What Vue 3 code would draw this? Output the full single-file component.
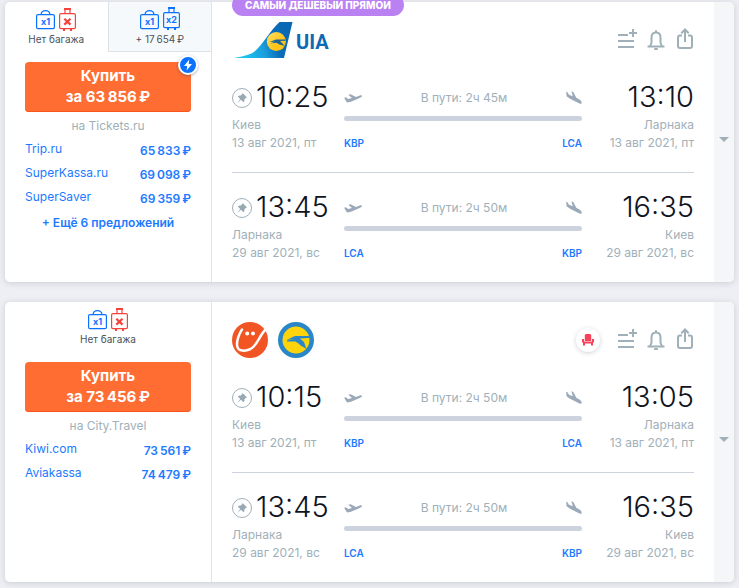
<script setup>
const tickets = [
  {
    id: 1,
    badge: 'Самый дешевый прямой',
    tabs: [
      { price: 'Нет багажа', bag: 'x1', luggage: null, active: true },
      { price: '+ 17\u2009654\u2009₽', bag: 'x1', luggage: 'x2', active: false },
    ],
    instant: true,
    price: '63\u2009856\u2009₽',
    agency: 'Tickets.ru',
    offers: [
      { name: 'Trip.ru', price: '65\u2009833\u2009₽' },
      { name: 'SuperKassa.ru', price: '69\u2009098\u2009₽' },
      { name: 'SuperSaver', price: '69\u2009359\u2009₽' },
    ],
    more: '+ Ещё 6 предложений',
    carriers: ['uia'],
    seat: false,
    segments: [
      { depart: '10:25', arrive: '13:10', from: 'Киев', to: 'Ларнака', date: '13 авг 2021, пт', duration: '2ч 45м', a: 'KBP', b: 'LCA' },
      { depart: '13:45', arrive: '16:35', from: 'Ларнака', to: 'Киев', date: '29 авг 2021, вс', duration: '2ч 50м', a: 'LCA', b: 'KBP' },
    ],
  },
  {
    id: 2,
    badge: '',
    tabs: [{ price: 'Нет багажа', bag: 'x1', luggage: null, active: true }],
    instant: false,
    price: '73\u2009456\u2009₽',
    agency: 'City.Travel',
    offers: [
      { name: 'Kiwi.com', price: '73\u2009561\u2009₽' },
      { name: 'Aviakassa', price: '74\u2009479\u2009₽' },
    ],
    more: '',
    carriers: ['smile', 'bird'],
    seat: true,
    segments: [
      { depart: '10:15', arrive: '13:05', from: 'Киев', to: 'Ларнака', date: '13 авг 2021, пт', duration: '2ч 50м', a: 'KBP', b: 'LCA' },
      { depart: '13:45', arrive: '16:35', from: 'Ларнака', to: 'Киев', date: '29 авг 2021, вс', duration: '2ч 50м', a: 'LCA', b: 'KBP' },
    ],
  },
]
</script>

<template>
  <main class="list">
    <article v-for="t in tickets" :key="t.id" class="card">
      <span v-if="t.badge" class="badge">{{ t.badge }}</span>

      <section class="side">
        <div class="tabs">
          <button
            v-for="(tab, i) in t.tabs"
            :key="i"
            type="button"
            class="tab"
            :class="{ inactive: !tab.active }"
          >
            <svg class="bags" viewBox="0 0 40 24" width="40" height="24">
              <g fill="none" stroke="#0b72ff" stroke-width="1.2">
                <rect x="0.6" y="7.6" width="17.8" height="14" rx="1.4" />
                <path d="M5 7.5C5.5 2.2 13.5 2.2 14 7.5" />
              </g>
              <text class="bag-text blue" x="9.5" y="17.7">{{ tab.bag }}</text>
              <g v-if="tab.luggage" fill="none" stroke="#0b72ff" stroke-width="1.2">
                <rect x="23.6" y="5.6" width="15.8" height="15" rx="1.4" />
                <path d="M29 5.5V1M34 5.5V1" />
                <path d="M28 1H35" stroke-width="2" />
                <path d="M28 20.6V23M35 20.6V23" stroke-width="2" />
              </g>
              <text v-if="tab.luggage" class="bag-text blue" x="31.5" y="16">{{ tab.luggage }}</text>
              <g v-if="!tab.luggage" fill="none" stroke="#f4433c" stroke-width="1.2">
                <rect x="23.6" y="6.6" width="15.8" height="15" rx="1.4" />
                <path d="M29 6.5V2M34 6.5V2" />
                <path d="M28 2H35" stroke-width="2" />
                <path d="M28 21.6V24M35 21.6V24" stroke-width="2" />
                <path d="M28.3 11.8L34.5 17.6M34.5 11.8L28.3 17.6" stroke-width="2.2" />
              </g>
            </svg>
            <span class="tab-price">{{ tab.price }}</span>
          </button>
        </div>

        <div class="offers">
          <button type="button" class="buy">
            <span>Купить</span>
            <span>за {{ t.price }}</span>
            <span v-if="t.instant" class="instant">
              <svg viewBox="0 0 16 16" width="16" height="16">
                <path fill="#fff" d="M9.3 2.5L4 9H7.2L6.6 13.5L12 7H8.7Z" />
              </svg>
            </span>
          </button>
          <p class="agency">на {{ t.agency }}</p>
          <a v-for="o in t.offers" :key="o.name" href="#" class="offer">
            <span>{{ o.name }}</span>
            <strong>{{ o.price }}</strong>
          </a>
          <button v-if="t.more" type="button" class="more">{{ t.more }}</button>
        </div>
      </section>

      <section class="main">
        <header class="head">
          <div class="carriers">
            <template v-for="c in t.carriers" :key="c">
              <svg v-if="c === 'uia'" viewBox="0 0 100 36" width="100" height="36">
                <defs>
                  <linearGradient id="tail" x1="0" y1="0.6" x2="1" y2="0.4">
                    <stop offset="0.1" stop-color="#1cc4f0" />
                    <stop offset="0.45" stop-color="#1a9fdc" />
                    <stop offset="0.7" stop-color="#0b6cb8" />
                    <stop offset="1" stop-color="#0a67b2" />
                  </linearGradient>
                  <linearGradient id="sun" x1="0" y1="0" x2="1" y2="1">
                    <stop offset="0" stop-color="#ffdf6a" />
                    <stop offset="0.6" stop-color="#fdc51b" />
                  </linearGradient>
                </defs>
                <path fill="url(#tail)" d="M2 36C12 34 18 33 22.500 29.500C31 22 38 9 47.500 0H60.500L52 36Z" />
                <circle cx="44.300" cy="19.500" r="9.500" fill="url(#sun)" />
                <path fill="#17649b" d="M37.500 20L44 17.500H53.500V18.800L48 19L51.500 22.500L53 24L47.500 22.500L44.500 20.800L38 21.500L43 19.800Z" />
                <text class="uia" x="64" y="27">UIA</text>
              </svg>
              <svg v-else-if="c === 'smile'" viewBox="0 0 36 36" width="36" height="36">
                <circle cx="18" cy="18" r="18" fill="#f15523" />
                <path fill="none" stroke="#fff" stroke-width="2.500" stroke-linecap="round" d="M10 7.500C7.500 11 4 19.500 5.300 24.500C6.500 29.500 13 29.500 18.500 27C25.500 23.500 27.500 13 33.500 7.800" />
                <circle cx="15.200" cy="11.500" r="2" fill="#fff" />
                <circle cx="21" cy="11.500" r="2" fill="#fff" />
              </svg>
              <svg v-else viewBox="0 0 36 36" width="36" height="36">
                <circle cx="18" cy="18" r="18" fill="#2886c9" />
                <circle cx="18" cy="18" r="13.500" fill="#fdd40b" />
                <path fill="#2886c9" d="M8.500 18L17 14H33V15.700L22 16.500L26 20L28.500 27C25 24.500 22.500 24 20.500 21.500L17.500 19.500L9 19.500V18.500L16.500 17Z" />
              </svg>
            </template>
          </div>
          <span v-if="t.seat" class="seat">
            <svg viewBox="0 0 14 14" width="14" height="14" fill="#f8425a">
              <path d="M4.800 1H9.200L10.200 2V8H3.800V2Z" />
              <path d="M1 6H3V8.500H11V6H13V9.500H12V12.500H10V10.500H4V12.500H2V9.500H1Z" />
            </svg>
          </span>
          <div class="actions">
            <button type="button" class="icon" aria-label="Добавить к сравнению">
              <svg viewBox="0 0 18 22" width="18" height="22">
                <path d="M0 6H10M0 12H16M0 18H16M15 0V8M11 4H19" />
              </svg>
            </button>
            <button type="button" class="icon" aria-label="Следить за ценой">
              <svg viewBox="0 0 18 22" width="18" height="22">
                <path d="M0.500 17.500H17.500M3 17C4.200 15.500 4.500 15 4.500 13V8.500C4.500 5.500 6.300 3.500 9 3.500S13.500 5.500 13.500 8.500V13C13.500 15 13.800 15.500 15 17" />
                <path d="M9 1.200V3.500M7.200 20H10.800" />
              </svg>
            </button>
            <button type="button" class="icon" aria-label="Поделиться">
              <svg viewBox="0 0 18 22" width="18" height="22">
                <path d="M6 6.500H4Q2 6.500 2 8.500V17Q2 19 4 19H14Q16 19 16 17V8.500Q16 6.500 14 6.500H12M9 1V13M5.300 4.200L9 0.500L12.700 4.200" />
              </svg>
            </button>
          </div>
        </header>

        <div v-for="(s, i) in t.segments" :key="i" class="segment">
          <div class="point">
            <div class="time-row">
              <button type="button" class="pin" aria-label="Закрепить">
                <svg viewBox="0 0 20 20" width="20" height="20">
                  <circle cx="10" cy="10" r="9.500" fill="none" stroke="#a0b0b9" />
                  <path fill="#98a9b4" d="M10.600 5L15 9.400L13.800 9.900L12.400 11.300C12.700 12.600 12.300 13.500 11.500 14.200L8.900 11.700L5.300 14.900L8.200 11L5.800 8.500C6.600 7.700 7.500 7.400 8.700 7.600L10.100 6.200Z" />
                </svg>
              </button>
              <span class="time">{{ s.depart }}</span>
            </div>
            <div class="sub">{{ s.from }}</div>
            <div class="sub">{{ s.date }}</div>
          </div>

          <div class="route">
            <div class="route-top">
              <svg viewBox="0 0 18 12" width="18" height="12">
                <path fill="#9aa8b8" d="M0.200 5.700L1.800 5.300L4.200 7L8 6.100L4.300 2.700L6.600 2.300L12 5L15.800 3.500C17.300 3 18.200 3.700 17.800 4.600C17.500 5.400 16 6 14.500 6.600L7 9.700L3.300 10.600L2.300 9.600Z" />
              </svg>
              <span>В пути: {{ s.duration }}</span>
              <svg viewBox="0 0 16 14" width="16" height="14">
                <path fill="#9aa8b8" d="M0.200 0.800L1.500 1.300L2.900 3.800L6.800 5.300L5.400 0.200L7.300 1L10.300 6.800L13.800 8.800C15.500 9.900 16 11.500 15.500 12.400C14.700 13 13.500 12.400 12 11.700L4 7.700L0.600 5.200Z" />
              </svg>
            </div>
            <div class="bar"></div>
            <div class="codes"><span>{{ s.a }}</span><span>{{ s.b }}</span></div>
          </div>

          <div class="point end">
            <div class="time-row"><span class="time">{{ s.arrive }}</span></div>
            <div class="sub">{{ s.to }}</div>
            <div class="sub">{{ s.date }}</div>
          </div>
        </div>
      </section>

      <button type="button" class="expand" aria-label="Подробнее"><span class="arrow"></span></button>
    </article>
  </main>
</template>

<style>
body {
  margin: 0;
  background: #eeeff4;
}
</style>

<style scoped>
.list {
  display: flex;
  flex-direction: column;
  gap: 20px;
  padding: 2px 5px 6px;
  font-family: Inter, "Liberation Sans", sans-serif;
  font-size: 12px;
  line-height: 18px;
  color: #a0b0b9;
}
button {
  margin: 0;
  padding: 0;
  border: 0;
  background: none;
  font: inherit;
  color: inherit;
  cursor: pointer;
}
svg {
  display: block;
  overflow: visible;
}
.card {
  position: relative;
  display: grid;
  grid-template-columns: 207px minmax(0, 1fr) 20px;
  min-height: 280px;
  border-radius: 5px;
  background: #fff;
  box-shadow: 0 1px 6px rgba(60, 70, 90, 0.2);
}
.badge {
  position: absolute;
  top: -8px;
  left: 227px;
  padding: 0 13px;
  border-radius: 12px;
  background: #b981f2;
  color: #fff;
  font-size: 10px;
  font-weight: 800;
  line-height: 22px;
  text-transform: uppercase;
  white-space: nowrap;
}
.side {
  display: flex;
  flex-direction: column;
  border-right: 1px solid #dfe3e8;
}
.tabs {
  display: flex;
}
.tab {
  flex: 1;
  display: flex;
  flex-direction: column;
  align-items: center;
  gap: 1px;
  height: 50px;
  padding-top: 5px;
  box-sizing: border-box;
  color: #4a5259;
  font-size: 10px;
  line-height: 14px;
}
.tab.inactive {
  border-left: 1px solid #dde2e7;
  border-bottom: 1px solid #dde2e7;
  background: #f6f9fb;
}
.bag-text {
  font-size: 9px;
  font-weight: 700;
  text-anchor: middle;
}
.blue {
  fill: #0b72ff;
}
.offers {
  display: flex;
  flex-direction: column;
  padding: 10px 20px;
}
.buy {
  position: relative;
  display: flex;
  flex-direction: column;
  align-items: center;
  justify-content: center;
  height: 50px;
  padding-bottom: 2px;
  box-sizing: border-box;
  border-radius: 4px;
  background: #ff6d33;
  box-shadow: inset 0 -1px #fb551c;
  color: #fff;
  font-size: 15px;
  font-weight: 700;
  line-height: 21px;
}
.instant {
  position: absolute;
  top: -7px;
  right: -7px;
  border: 2px solid #fff;
  border-radius: 50%;
  background: #0b72ff;
  box-shadow: 0 1px 3px rgba(40, 60, 90, 0.4);
}
.agency {
  margin: 4px 0 3px;
  line-height: 20px;
  text-align: center;
}
.offer {
  display: flex;
  justify-content: space-between;
  height: 24px;
  color: #1c7aff;
  line-height: 20px;
  text-decoration: none;
}
.offer strong {
  font-weight: 600;
  line-height: 24px;
}
.more {
  color: #1c7aff;
  font-weight: 600;
  line-height: 24px;
}
.main {
  padding: 20px;
}
.head {
  display: flex;
  align-items: center;
  height: 36px;
  margin-bottom: 20px;
}
.carriers {
  display: flex;
  gap: 10px;
  margin-right: auto;
}
.uia {
  font-family: Roboto, sans-serif;
  font-size: 20px;
  font-weight: 700;
  fill: #0f69b4;
}
.seat {
  margin-right: 18px;
  padding: 5px;
  border-radius: 50%;
  background: #fff;
  box-shadow: 0 1px 4px rgba(60, 70, 90, 0.25);
}
.actions {
  display: flex;
  gap: 11px;
}
.icon svg {
  fill: none;
  stroke: #a0b0b9;
  stroke-width: 2;
}
.segment {
  display: grid;
  grid-template-columns: 100px minmax(0, 1fr) 100px;
  gap: 12px;
}
.segment + .segment {
  margin-top: 20px;
  padding-top: 15px;
  border-top: 1px solid #cdd3de;
}
.time-row,
.route-top {
  display: flex;
  align-items: center;
  height: 38px;
}
.time-row {
  gap: 4px;
}
.pin,
.route-top {
  padding-top: 2px;
  box-sizing: border-box;
}
.time {
  color: #10141e;
  font-size: 29px;
  font-weight: 300;
  line-height: 36px;
}
.end {
  text-align: right;
}
.end .time-row {
  justify-content: flex-end;
}
.sub {
  white-space: nowrap;
}
.route-top {
  justify-content: space-between;
}
.bar {
  height: 5px;
  border-radius: 3px;
  background: #cdd3de;
}
.codes {
  display: flex;
  justify-content: space-between;
  margin-top: 13px;
  color: #1c7aff;
  font-size: 10px;
  font-weight: 600;
}
.expand {
  display: flex;
  align-items: center;
  justify-content: center;
  padding-bottom: 6px;
  border-radius: 0 5px 5px 0;
  background: #f5f6f8;
}
.arrow {
  border: 5px solid transparent;
  border-top-color: #a0b0b9;
  border-bottom: 0;
}
</style>
